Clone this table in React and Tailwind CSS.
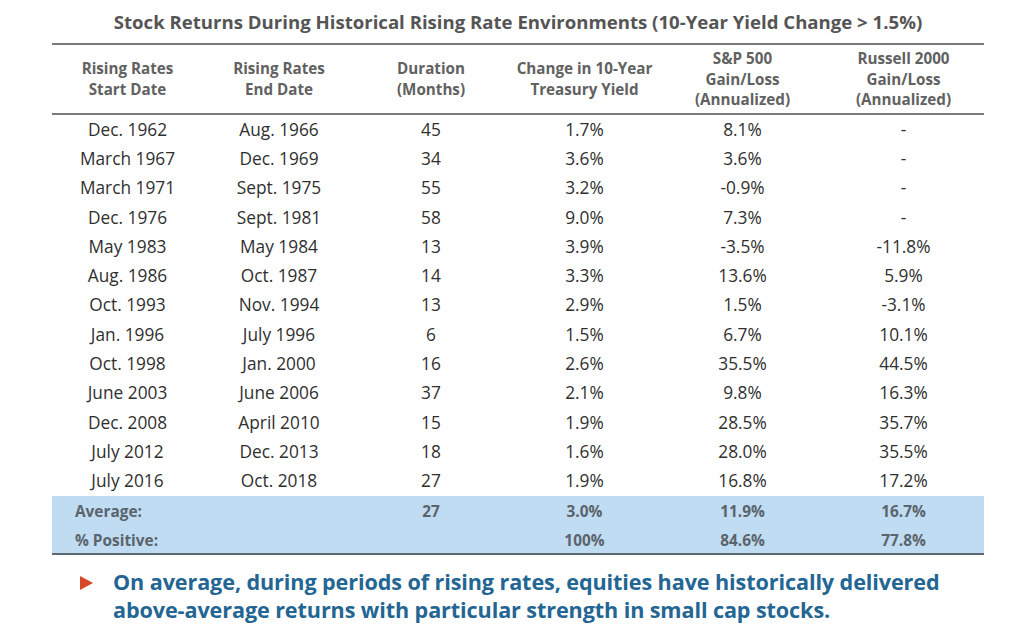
import React from "react";

const rows = [
  ["Dec. 1962", "Aug. 1966", "45", "1.7%", "8.1%", "-"],
  ["March 1967", "Dec. 1969", "34", "3.6%", "3.6%", "-"],
  ["March 1971", "Sept. 1975", "55", "3.2%", "-0.9%", "-"],
  ["Dec. 1976", "Sept. 1981", "58", "9.0%", "7.3%", "-"],
  ["May 1983", "May 1984", "13", "3.9%", "-3.5%", "-11.8%"],
  ["Aug. 1986", "Oct. 1987", "14", "3.3%", "13.6%", "5.9%"],
  ["Oct. 1993", "Nov. 1994", "13", "2.9%", "1.5%", "-3.1%"],
  ["Jan. 1996", "July 1996", "6", "1.5%", "6.7%", "10.1%"],
  ["Oct. 1998", "Jan. 2000", "16", "2.6%", "35.5%", "44.5%"],
  ["June 2003", "June 2006", "37", "2.1%", "9.8%", "16.3%"],
  ["Dec. 2008", "April 2010", "15", "1.9%", "28.5%", "35.7%"],
  ["July 2012", "Dec. 2013", "18", "1.6%", "28.0%", "35.5%"],
  ["July 2016", "Oct. 2018", "27", "1.9%", "16.8%", "17.2%"],
];

const headers = [
  ["Rising Rates", "Start Date"],
  ["Rising Rates", "End Date"],
  ["Duration", "(Months)"],
  ["Change in 10-Year", "Treasury Yield"],
  ["S&P 500", "Gain/Loss", "(Annualized)"],
  ["Russell 2000", "Gain/Loss", "(Annualized)"],
];

const cols = "grid grid-cols-[151px_152px_152px_155px_161px_161px]";

export default function App() {
  return (
    <div
      className="w-[1024px] h-[639px] bg-white overflow-hidden"
      style={{ fontFamily: '"Open Sans", "Noto Sans", sans-serif' }}
    >
      <div className="pt-[9px] pl-[52px] w-[984px]">
        <div className="text-center font-bold text-[18.6px] leading-[26px] text-[#555555]">
          Stock Returns During Historical Rising Rate Environments (10-Year Yield Change &gt; 1.5%)
        </div>
        <div className="mt-[8px] border-t-2 border-[#7a7a7a]" />
        <div className={`${cols} h-[70px] items-center border-b-2 border-[#7a7a7a]`}>
          {headers.map((h, i) => (
            <div key={i} className="text-center font-bold text-[15.2px] leading-[20.7px] text-[#616161]">
              {h.map((l, j) => (
                <div key={j}>{l}</div>
              ))}
            </div>
          ))}
        </div>
        <div>
          {rows.map((r, i) => (
            <div key={i} className={`${cols} h-[29.3px] items-center`}>
              {r.map((c, j) => (
                <div key={j} className="text-center text-[17.3px] leading-[20px] text-[#2f2f2f]">
                  {c}
                </div>
              ))}
            </div>
          ))}
        </div>
        <div className="bg-[#bfdcf2] border-b-2 border-[#5d6873]">
          <div className={`${cols} h-[31px] items-center font-bold text-[15.4px] text-[#5b646c]`}>
            <div className="pl-[23px]">Average:</div>
            <div />
            <div className="text-center">27</div>
            <div className="text-center">3.0%</div>
            <div className="text-center">11.9%</div>
            <div className="text-center">16.7%</div>
          </div>
          <div className={`${cols} h-[26px] pt-[2px] items-center font-bold text-[15.4px] text-[#5b646c]`}>
            <div className="pl-[23px]">% Positive:</div>
            <div />
            <div />
            <div className="text-center">100%</div>
            <div className="text-center">84.6%</div>
            <div className="text-center">77.8%</div>
          </div>
        </div>
        <div className="mt-[13px] flex items-start pl-[28px]">
          <svg width="13" height="14" viewBox="0 0 13 14" className="mt-[8px] shrink-0">
            <polygon points="0,0 13,7 0,14" fill="#d9472b" />
          </svg>
          <div className="ml-[20px] font-bold text-[21.6px] leading-[28px] text-[#236593] tracking-[-0.1px]">
            On average, during periods of rising rates, equities have historically delivered
            <br />
            above-average returns with particular strength in small cap stocks.
          </div>
        </div>
      </div>
    </div>
  );
}
